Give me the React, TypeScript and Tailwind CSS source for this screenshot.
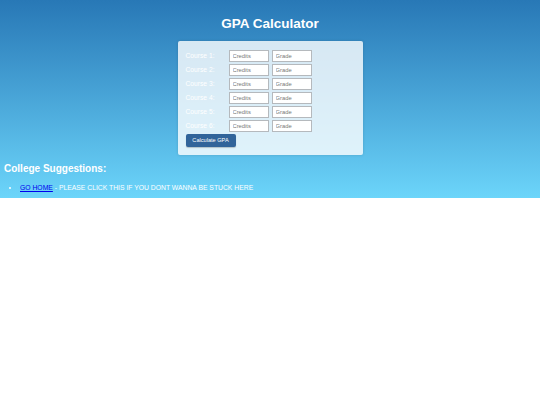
const courses = [1, 2, 3, 4, 5, 6];

export default function App() {
  return (
    <div className="min-h-screen bg-white font-['Liberation_Sans',Arial,sans-serif]">
      <div className="bg-gradient-to-b from-[#2878b6] to-[#6cd5fa] pb-[6px]">
        <h1 className="pt-[16px] text-center text-[13.5px] leading-[16px] font-bold text-white">
          GPA Calculator
        </h1>
        <div className="mx-auto mt-[9px] w-[185px] rounded-[2px] bg-white/80 px-[8px] pt-[9px] pb-[8px] leading-none shadow-[0_0_3px_rgba(0,0,0,0.15)]">
          {courses.map((n) => (
            <div key={n} className="mb-[2px] flex items-center">
              <label className="w-[43px] text-[6.7px] text-white">Course {n}:</label>
              <input
                placeholder="Credits"
                className="h-[12px] w-[40px] border border-[#b5b9bd] bg-white px-[3px] text-[5.8px] placeholder:text-[#777]"
              />
              <input
                placeholder="Grade"
                className="ml-[3px] h-[12px] w-[40px] border border-[#b5b9bd] bg-white px-[3px] text-[5.8px] placeholder:text-[#777]"
              />
            </div>
          ))}
          <button className="mt-[2px] block h-[13px] w-[50px] rounded-[2px] bg-[#31649a] text-[5.6px] text-white shadow-[0_1px_1px_rgba(0,0,0,0.2)]">
            Calculate GPA
          </button>
        </div>
        <h2 className="mt-[8px] pl-[4px] text-[10px] leading-[12px] font-bold text-white">
          College Suggestions:
        </h2>
        <ul className="mt-[9px] list-disc pl-[20px] text-[6.8px] leading-[8px] text-white">
          <li>
            <a href="#" className="text-[#0000ee] underline">
              GO HOME
            </a>{" "}
            - PLEASE CLICK THIS IF YOU DONT WANNA BE STUCK HERE
          </li>
        </ul>
      </div>
    </div>
  );
}
